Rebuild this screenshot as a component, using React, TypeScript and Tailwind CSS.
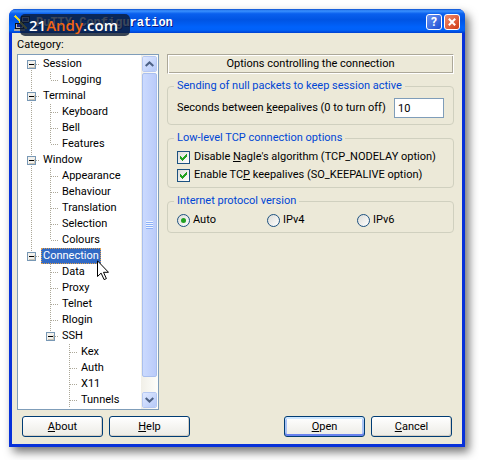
import { type ReactNode } from "react";

type Line = "none" | "full" | "tee" | "end" | "boxFirst" | "boxMid" | "boxEnd";
type Row = { label: string; lines: Line[]; selected?: boolean };

const rows: Row[] = [
  { label: "Session", lines: ["boxFirst"] },
  { label: "Logging", lines: ["full", "end"] },
  { label: "Terminal", lines: ["boxMid"] },
  { label: "Keyboard", lines: ["full", "tee"] },
  { label: "Bell", lines: ["full", "tee"] },
  { label: "Features", lines: ["full", "end"] },
  { label: "Window", lines: ["boxMid"] },
  { label: "Appearance", lines: ["full", "tee"] },
  { label: "Behaviour", lines: ["full", "tee"] },
  { label: "Translation", lines: ["full", "tee"] },
  { label: "Selection", lines: ["full", "tee"] },
  { label: "Colours", lines: ["full", "end"] },
  { label: "Connection", lines: ["boxEnd"], selected: true },
  { label: "Data", lines: ["none", "tee"] },
  { label: "Proxy", lines: ["none", "tee"] },
  { label: "Telnet", lines: ["none", "tee"] },
  { label: "Rlogin", lines: ["none", "tee"] },
  { label: "SSH", lines: ["none", "boxEnd"] },
  { label: "Kex", lines: ["none", "none", "tee"] },
  { label: "Auth", lines: ["none", "none", "tee"] },
  { label: "X11", lines: ["none", "none", "tee"] },
  { label: "Tunnels", lines: ["none", "none", "tee"] },
];

function Branch({ line }: { line: Line }) {
  const box = line.startsWith("box");
  const up = line !== "none" && line !== "boxFirst";
  const down = line === "full" || line === "tee" || line === "boxFirst" || line === "boxMid";
  const across = line !== "none" && line !== "full";
  return (
    <svg width="19" height="16" viewBox="0 0 19 16" className="shrink-0" shapeRendering="crispEdges" aria-hidden="true">
      <g stroke="#aca899" strokeDasharray="1 1" fill="none">
        {up && <path d="M9.5 0V8" />}
        {down && <path d="M9.5 8V16" />}
        {across && <path d="M10 8.5H18" />}
      </g>
      {box && (
        <g>
          <rect x="5.5" y="4.5" width="8" height="8" fill="#f3f1ec" stroke="#7898b5" />
          <path d="M7 11.5H13M12.5 7V12" stroke="#cbc5b6" />
          <path d="M7 8.5H12" stroke="#000" />
        </g>
      )}
    </svg>
  );
}

function ScrollButton({ up }: { up?: boolean }) {
  return (
    <button
      type="button"
      aria-label={up ? "Scroll up" : "Scroll down"}
      className="flex h-4 w-full shrink-0 items-center justify-center rounded-xs border border-white bg-linear-to-br from-[#dfe8ff] to-[#b5c9f8] outline outline-[#b6c8f2] -outline-offset-1"
    >
      <svg width="9" height="6" viewBox="0 0 9 6" fill="none" stroke="#4d6185" strokeWidth="2">
        <path d={up ? "M.7 5 4.5 1.4 8.3 5" : "M.7 1 4.5 4.6 8.3 1"} />
      </svg>
    </button>
  );
}

function Group({ title, children }: { title: string; children: ReactNode }) {
  return (
    <fieldset className="min-w-0 rounded-[4px] border border-[#d0d0bf] pr-[9px] pl-[6px]">
      <legend className="px-[3px] text-[#0046d5]">{title}</legend>
      {children}
    </fieldset>
  );
}

function Check({ children }: { children: ReactNode }) {
  return (
    <label className="flex h-[18px] items-center gap-1 pl-[3px]">
      <span className="grid shrink-0">
        <input
          type="checkbox"
          defaultChecked
          className="peer col-start-1 row-start-1 size-[13px] appearance-none border border-[#1c5180] bg-linear-to-br from-[#dcdcd7] to-white"
        />
        <svg viewBox="0 0 13 13" className="pointer-events-none invisible col-start-1 row-start-1 size-[13px] peer-checked:visible" fill="#21a121" shapeRendering="crispEdges">
          <path d="M3 5h1v1h1v1h1v-1h1v-1h1v-1h1v-1h1v3h-1v1h-1v1h-1v1h-1v1h-1v-1h-1v-1h-1z" />
        </svg>
      </span>
      <span className="whitespace-nowrap">{children}</span>
    </label>
  );
}

function Radio({ label, checked }: { label: string; checked?: boolean }) {
  return (
    <label className="flex w-[90px] items-center gap-[3px] pl-[3px]">
      <span className="grid shrink-0 place-items-center">
        <input
          type="radio"
          name="protocol"
          defaultChecked={checked}
          className="peer col-start-1 row-start-1 size-[13px] appearance-none rounded-full border border-[#1c5180] bg-linear-to-br from-[#dcdcd7] to-white"
        />
        <span className="pointer-events-none invisible col-start-1 row-start-1 size-[5px] rounded-full bg-[#21a121] peer-checked:visible" />
      </span>
      {label}
    </label>
  );
}

function PushButton({ first, rest, primary }: { first: string; rest: string; primary?: boolean }) {
  return (
    <button
      type="button"
      className={
        "h-[21px] w-[81px] rounded-[3px] border border-[#003c74] bg-linear-to-b from-white to-[#ecebe5] text-center leading-[19px] " +
        (primary
          ? "shadow-[inset_0_2px_0_#cee7ff,inset_0_-2px_0_#6982ee,inset_2px_0_0_#a9c3f5,inset_-2px_0_0_#a9c3f5]"
          : "shadow-[inset_-1px_-1px_0_#d6d0c5]")
      }
    >
      <u>{first}</u>
      {rest}
    </button>
  );
}

export default function App() {
  return (
    <div className="relative bg-white pt-[9px] pr-[14px] pb-[14px] pl-[9px] font-['Roboto',sans-serif] text-[11px] leading-4 text-black">
      <main className="rounded-t-[7px] bg-[#0831d9] shadow-[4px_5px_10px_0_rgba(0,0,0,0.55)]">
        <header className="flex h-6 items-center justify-between rounded-t-[7px] bg-[linear-gradient(#0a4fd0_0%,#3b92ff_8%,#0a60ee_20%,#0054e3_45%,#0062fb_75%,#0061f8_88%,#0040d0_100%)] pr-[5px] pl-[5px]">
          <div className="flex items-center gap-[6px] pt-1">
            <svg width="16" height="16" viewBox="0 0 16 16" shapeRendering="crispEdges" aria-hidden="true">
              <path d="M7 1h8v6H7zM1 8h8v5H1z" fill="#b9b9b9" stroke="#111" />
              <path d="M9 3h5v3H9zM3 9h5v3H3z" fill="#152b90" />
              <path d="M0 14h11v2H0z" fill="#a8a8a8" />
              <path d="m1 1 4 4 1 2 7 7" stroke="#e6d62a" strokeWidth="2" fill="none" />
            </svg>
            <h1 className="font-['Liberation_Mono',monospace] text-[12px] font-bold text-white [text-shadow:1px_1px_0_#0a1883]">PuTTY Configuration</h1>
          </div>
          <div className="flex gap-[2px] pt-[2px]">
            <button type="button" aria-label="Help" className="flex size-4 items-center justify-center rounded-[3px] border border-white bg-linear-to-br from-[#6b93f2] to-[#1c4bd2] text-[12px] leading-none font-bold text-white">
              ?
            </button>
            <button type="button" aria-label="Close" className="flex size-4 items-center justify-center rounded-[3px] border border-white bg-linear-to-br from-[#ee8a6b] to-[#cf3606]">
              <svg width="8" height="8" viewBox="0 0 8 8" stroke="#fff" strokeWidth="2">
                <path d="m.8.8 6.4 6.4M7.2.8.8 7.2" />
              </svg>
            </button>
          </div>
        </header>

        <div className="border-x-3 border-b-3 border-t-0 border-[#0831d9] bg-[#ece9d8] pr-2 pb-[7px] pl-[5px]">
          <p className="h-[21px] pt-1">Category:</p>
          <div className="flex gap-2">
            <nav aria-label="Category" className="flex h-[356px] w-[142px] shrink-0 overflow-hidden border border-[#7f9db9] bg-white">
              <ul className="min-w-0 flex-1 pt-px pl-1">
                {rows.map((row) => (
                  <li key={row.label} className="flex h-4">
                    {row.lines.map((line, i) => (
                      <Branch key={i} line={line} />
                    ))}
                    <button
                      type="button"
                      className={
                        "h-4 px-[2px] text-left leading-4 whitespace-nowrap " +
                        (row.selected ? "bg-[#316ac5] text-white outline-1 -outline-offset-1 outline-dotted outline-[#e0a050]" : "")
                      }
                    >
                      {row.label}
                    </button>
                  </li>
                ))}
              </ul>
              <div className="flex w-[17px] shrink-0 flex-col gap-px bg-linear-to-r from-[#f1efe8] to-[#fefefb] p-px">
                <ScrollButton up />
                <div className="flex h-[304px] flex-col items-center justify-center gap-px rounded-xs border border-[#a9bfee] bg-linear-to-r from-[#cbdafe] to-[#bacbfa]">
                  {[0, 1, 2, 3].map((n) => (
                    <span key={n} className="h-px w-[7px] border-t border-[#8cb0f8] shadow-[0_-1px_0_#eef4fe]" />
                  ))}
                </div>
                <div className="flex-1" />
                <ScrollButton />
              </div>
            </nav>

            <section className="flex min-w-0 flex-1 flex-col">
              <h2 className="h-5 border border-t-[#aca899] border-r-white border-b-white border-l-[#aca899] text-center leading-[18px] shadow-[inset_1px_1px_0_#fff,inset_-1px_-1px_0_#aca899]">
                Options controlling the connection
              </h2>
              <div className="flex flex-col gap-[5px] pt-1">
                <Group title="Sending of null packets to keep session active">
                  <div className="flex items-center justify-between pt-[4px] pb-[6px] pl-[3px]">
                    <label htmlFor="keepalive" className="whitespace-nowrap">
                      Seconds between <u>k</u>eepalives (0 to turn off)
                    </label>
                    <input id="keepalive" defaultValue="10" className="h-5 w-[50px] border border-[#7f9db9] bg-white px-[3px]" />
                  </div>
                </Group>
                <Group title="Low-level TCP connection options">
                  <div className="pt-[2px] pb-[3px]">
                    <Check>
                      Disable <u>N</u>agle's algorithm (TCP_NODELAY option)
                    </Check>
                    <Check>
                      Enable TC<u>P</u> keepalives (SO_KEEPALIVE option)
                    </Check>
                  </div>
                </Group>
                <Group title="Internet protocol version">
                  <div className="flex pt-[3px] pb-1">
                    <Radio label="Auto" checked />
                    <Radio label="IPv4" />
                    <Radio label="IPv6" />
                  </div>
                </Group>
              </div>
            </section>
          </div>
          <footer className="flex justify-between pt-[6px] pr-[2px] pl-[5px]">
            <div className="flex gap-[6px]">
              <PushButton first="A" rest="bout" />
              <PushButton first="H" rest="elp" />
            </div>
            <div className="flex gap-[6px]">
              <PushButton first="O" rest="pen" primary />
              <PushButton first="C" rest="ancel" />
            </div>
          </footer>
        </div>
      </main>

      <div className="absolute top-[14px] left-5 h-[22px] w-[110px] rounded-[5px] bg-[#0b1a33]/80 pl-[9px] font-['Open_Sans',sans-serif] text-[15px] leading-[22px] font-semibold whitespace-nowrap text-white">
        21<span className="text-[#f26513]">Andy</span>.com
      </div>

      <svg className="pointer-events-none absolute top-[260px] left-[97px]" width="12" height="21" viewBox="0 0 12 21" aria-hidden="true">
        <path d="M.5.8v15.7l3.6-3.4 3 6.5 2.3-1-2.9-6.3h5z" fill="#fff" stroke="#000" />
      </svg>
    </div>
  );
}
